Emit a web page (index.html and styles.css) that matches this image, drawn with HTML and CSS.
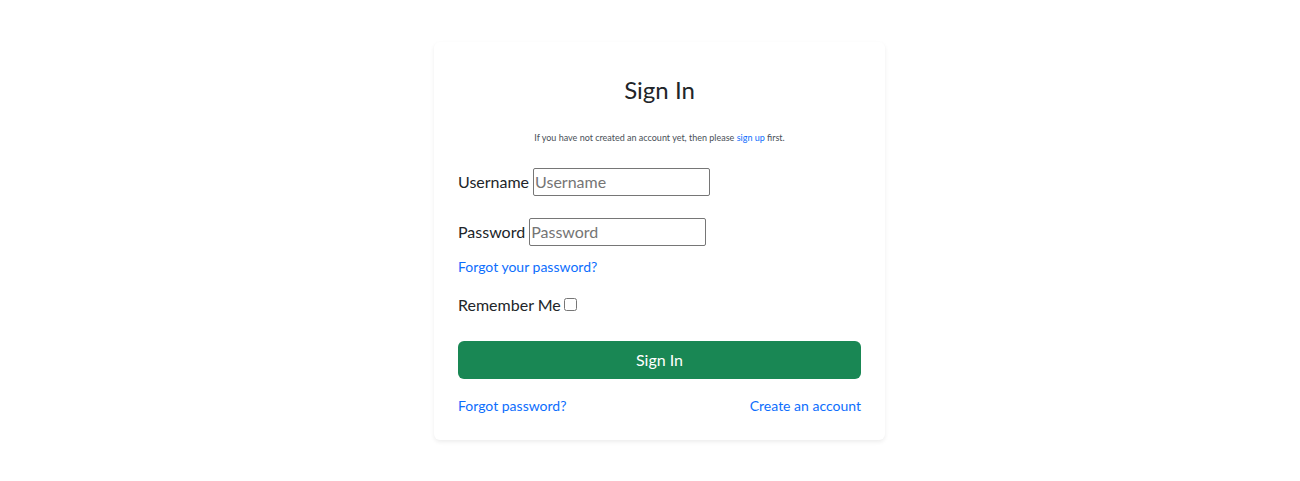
FILE: index.html
```html
<!DOCTYPE html>
<html lang="en">
<head>
<meta charset="utf-8">
<title>Sign In</title>
<link rel="stylesheet" href="styles.css">
</head>
<body>
<main class="page">
  <form class="card">
    <h1 class="title">Sign In</h1>
    <p class="hint">If you have not created an account yet, then please <a href="#signup">sign up</a> first.</p>
    <div class="field">
      <label for="username">Username</label>
      <input class="text-input" id="username" type="text" placeholder="Username">
    </div>
    <div class="field field-password">
      <label for="password">Password</label>
      <input class="text-input" id="password" type="password" placeholder="Password">
    </div>
    <a class="small-link" href="#reset">Forgot your password?</a>
    <div class="remember">
      <label for="remember">Remember Me</label>
      <input class="check" id="remember" type="checkbox">
    </div>
    <button class="submit" type="submit">Sign In</button>
    <div class="links">
      <a class="small-link" href="#reset">Forgot password?</a>
      <a class="small-link" href="#signup">Create an account</a>
    </div>
  </form>
</main>
</body>
</html>
```
FILE: styles.css
```css
* {
  box-sizing: border-box;
}

body {
  margin: 0;
  background: #fff;
  color: #212529;
  font-family: Lato, "Liberation Sans", sans-serif;
  font-size: 16px;
  line-height: 24px;
}

a {
  color: #0d6efd;
  text-decoration: none;
}

.page {
  display: flex;
  justify-content: center;
  padding: 42px 11px 40px 30px;
}

.card {
  width: 100%;
  max-width: 451px;
  padding: 32px 24px 23px;
  border-radius: 6px;
  background: #fff;
  box-shadow: 0 2px 4px rgba(0, 0, 0, 0.075);
}

.title {
  margin: 0 0 24px;
  font-size: 24px;
  font-weight: 400;
  line-height: 32px;
  text-align: center;
}

.hint {
  margin: 0 0 22px;
  color: #495057;
  font-size: 9px;
  line-height: 16px;
  text-align: center;
}

.field {
  display: flex;
  align-items: center;
  gap: 4px;
  margin-bottom: 22px;
}

.field-password {
  margin-bottom: 10px;
}

.text-input {
  width: 177px;
  height: 28px;
  padding: 0 1px 2px;
  border: 1px solid #767676;
  border-radius: 2px;
  color: inherit;
  font: inherit;
}

.text-input::placeholder {
  color: #757575;
}

.small-link {
  display: block;
  font-size: 14px;
  line-height: 22px;
}

.remember {
  display: flex;
  align-items: center;
  gap: 3px;
  margin: 15px 0 24px;
}

.check {
  width: 13px;
  height: 13px;
  margin: 0 0 2px;
}

.submit {
  display: block;
  width: 100%;
  height: 38px;
  border: 0;
  border-radius: 6px;
  background: #198754;
  color: #fff;
  font: inherit;
}

.links {
  display: flex;
  justify-content: space-between;
  margin-top: 16px;
}
```
